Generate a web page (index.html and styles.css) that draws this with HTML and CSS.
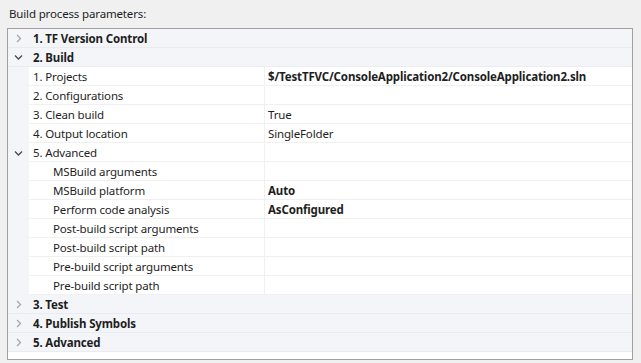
FILE: index.html
```html
<!DOCTYPE html>
<html>
<head>
<meta charset="utf-8">
<link rel="stylesheet" href="styles.css">
</head>
<body>
<div class="caption">Build process parameters:</div>
<div class="panel">
  <div class="row cat">
    <span class="gut"><svg class="chev" width="8" height="9" viewBox="0 0 8 9"><path d="M2 1 L5.5 4.5 L2 8" fill="none" stroke="#a6a6a6" stroke-width="1.3"/></svg></span>
    <span class="cat-label">1. TF Version Control</span>
  </div>
  <div class="row cat">
    <span class="gut"><svg class="chev" width="9" height="8" viewBox="0 0 9 8"><path d="M1 2.5 L4.5 6 L8 2.5" fill="none" stroke="#4a4a4a" stroke-width="1.3"/></svg></span>
    <span class="cat-label">2. Build</span>
  </div>
  <div class="row item"><span class="gut"></span><span class="name">1. Projects</span><span class="val bold">$/TestTFVC/ConsoleApplication2/ConsoleApplication2.sln</span></div>
  <div class="row item"><span class="gut"></span><span class="name">2. Configurations</span><span class="val"></span></div>
  <div class="row item"><span class="gut"></span><span class="name">3. Clean build</span><span class="val">True</span></div>
  <div class="row item"><span class="gut"></span><span class="name">4. Output location</span><span class="val">SingleFolder</span></div>
  <div class="row item"><span class="gut"><svg class="chev" width="9" height="8" viewBox="0 0 9 8"><path d="M1 2.5 L4.5 6 L8 2.5" fill="none" stroke="#4a4a4a" stroke-width="1.3"/></svg></span><span class="name">5. Advanced</span><span class="val"></span></div>
  <div class="row item"><span class="gut"></span><span class="name sub">MSBuild arguments</span><span class="val"></span></div>
  <div class="row item"><span class="gut"></span><span class="name sub">MSBuild platform</span><span class="val bold">Auto</span></div>
  <div class="row item"><span class="gut"></span><span class="name sub">Perform code analysis</span><span class="val bold">AsConfigured</span></div>
  <div class="row item"><span class="gut"></span><span class="name sub">Post-build script arguments</span><span class="val"></span></div>
  <div class="row item"><span class="gut"></span><span class="name sub">Post-build script path</span><span class="val"></span></div>
  <div class="row item"><span class="gut"></span><span class="name sub">Pre-build script arguments</span><span class="val"></span></div>
  <div class="row item"><span class="gut"></span><span class="name sub">Pre-build script path</span><span class="val"></span></div>
  <div class="row cat">
    <span class="gut"><svg class="chev" width="8" height="9" viewBox="0 0 8 9"><path d="M2 1 L5.5 4.5 L2 8" fill="none" stroke="#a6a6a6" stroke-width="1.3"/></svg></span>
    <span class="cat-label">3. Test</span>
  </div>
  <div class="row cat">
    <span class="gut"><svg class="chev" width="8" height="9" viewBox="0 0 8 9"><path d="M2 1 L5.5 4.5 L2 8" fill="none" stroke="#a6a6a6" stroke-width="1.3"/></svg></span>
    <span class="cat-label">4. Publish Symbols</span>
  </div>
  <div class="row cat">
    <span class="gut"><svg class="chev" width="8" height="9" viewBox="0 0 8 9"><path d="M2 1 L5.5 4.5 L2 8" fill="none" stroke="#a6a6a6" stroke-width="1.3"/></svg></span>
    <span class="cat-label">5. Advanced</span>
  </div>
</div>
</body>
</html>
```
FILE: styles.css
```css
html, body {
  margin: 0;
  padding: 0;
  background: #f0f0f0;
  width: 641px;
  height: 363px;
  overflow: hidden;
  font-family: "Noto Sans", "Open Sans", sans-serif;
  font-size: 11.5px;
  letter-spacing: -0.15px;
  color: #1e1e1e;
}
.caption {
  height: 28px;
  padding-left: 9px;
  padding-top: 1px;
  line-height: 26px;
  box-sizing: border-box;
}
.panel {
  margin-left: 7px;
  width: 626px;
  height: 332px;
  box-sizing: border-box;
  border: 1px solid #a0a0a0;
  background: #ffffff;
}
.row {
  display: flex;
  height: 19px;
  line-height: 18px;
  box-sizing: border-box;
}
.row > span {
  padding-top: 1px;
  box-sizing: border-box;
}
.row > .gut {
  padding-top: 0;
}
.gut {
  width: 21px;
  flex: none;
  display: flex;
  align-items: center;
  justify-content: center;
  background: #f4f5f9;
}
.cat {
  background: #f4f5f9;
  border-bottom: 1px solid #ebecf0;
}
.cat-label {
  font-weight: bold;
  padding-left: 4px;
}
.item .name {
  width: 236px;
  flex: none;
  padding-left: 4px;
  border-bottom: 1px solid #f0f0f0;
  border-right: 1px solid #f0f0f0;
}
.item .name.sub {
  padding-left: 24px;
}
.item .val {
  flex: 1;
  padding-left: 3px;
  border-bottom: 1px solid #f0f0f0;
}
.bold {
  font-weight: bold;
}
.chev {
  display: block;
}
```
